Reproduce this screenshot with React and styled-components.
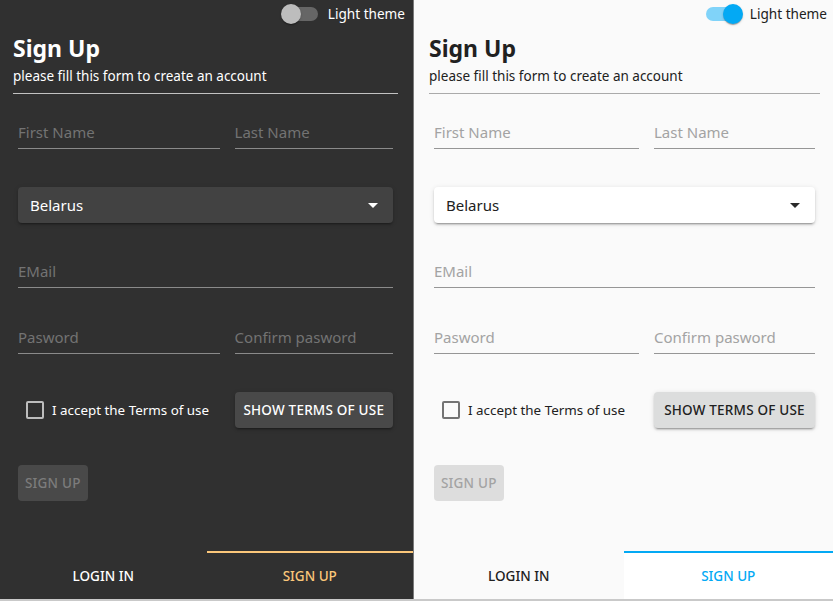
import React from "react";
import styled, { createGlobalStyle, css } from "styled-components";

const GlobalStyle = createGlobalStyle`
  html, body { margin: 0; padding: 0; }
  body {
    font-family: "Noto Sans", "Open Sans", sans-serif;
    -webkit-font-smoothing: antialiased;
  }
  * { box-sizing: border-box; }
`;

const themes = {
  dark: {
    bg: "#303030",
    text: "#ffffff",
    divider: "#c2c2c2",
    underline: "#8a8a8a",
    placeholder: "#737373",
    selectBg: "#424242",
    arrow: "#ffffff",
    buttonBg: "#494949",
    buttonText: "#ffffff",
    disabledBg: "#494949",
    disabledText: "#7c7c7c",
    checkbox: "#bdbdbd",
    tabText: "#ffffff",
    tabActive: "#fbc77a",
    tabActiveBg: "#303030",
    track: "#666666",
    thumb: "#bdbdbd",
  },
  light: {
    bg: "#fafafa",
    text: "#212121",
    divider: "#aaaaaa",
    underline: "#969696",
    placeholder: "#a3a3a3",
    selectBg: "#ffffff",
    arrow: "#2a2a2a",
    buttonBg: "#dcdddd",
    buttonText: "#212121",
    disabledBg: "#dddddd",
    disabledText: "#a3a3a3",
    checkbox: "#737373",
    tabText: "#212121",
    tabActive: "#03a9f4",
    tabActiveBg: "#ffffff",
    track: "#80d3f9",
    thumb: "#03a9f4",
  },
};

const elevation2 =
  "0px 3px 1px -2px rgba(0,0,0,0.2), 0px 2px 2px 0px rgba(0,0,0,0.14), 0px 1px 5px 0px rgba(0,0,0,0.12)";

const Page = styled.div`
  display: flex;
  height: 601px;
  border-bottom: 2px solid #c9c9c9;
`;

const Panel = styled.section`
  display: flex;
  flex-direction: column;
  background: ${(p) => p.$t.bg};
  color: ${(p) => p.$t.text};
  ${(p) =>
    p.$first
      ? css`
          width: 414px;
          border-right: 1px solid #7a7a7a;
        `
      : css`
          flex: 1;
        `}
`;

const Content = styled.div`
  flex: 1;
  display: flex;
  flex-direction: column;
  padding: 0 ${(p) => p.$pr}px 0 ${(p) => p.$pl}px;
`;

const TopBar = styled.div`
  height: 28px;
  display: flex;
  align-items: center;
  justify-content: flex-end;
  gap: 7px;
  margin-right: ${(p) => p.$mr}px;
`;

const SwitchRoot = styled.span`
  position: relative;
  width: 40px;
  height: 20px;
  flex: none;
`;

const Track = styled.span`
  position: absolute;
  left: 3px;
  top: 3px;
  width: 34px;
  height: 14px;
  border-radius: 7px;
  background: ${(p) => p.$t.track};
`;

const Thumb = styled.span`
  position: absolute;
  top: 0;
  left: ${(p) => (p.$on ? 20 : 0)}px;
  width: 20px;
  height: 20px;
  border-radius: 50%;
  background: ${(p) => p.$t.thumb};
  box-shadow: 0px 2px 1px -1px rgba(0,0,0,0.2), 0px 1px 1px 0px rgba(0,0,0,0.14), 0px 1px 3px 0px rgba(0,0,0,0.12);
`;

const SwitchLabel = styled.span`
  font-size: 13.6px;
  line-height: 20px;
`;

const Title = styled.h1`
  margin: 4px 0 0;
  font-size: 23px;
  line-height: 32px;
  font-weight: 700;
`;

const Subtitle = styled.p`
  margin: 2px 0 0;
  font-size: 13.5px;
  line-height: 20px;
`;

const Divider = styled.hr`
  margin: 7px 0 0;
  border: none;
  height: 1px;
  background: ${(p) => p.$t.divider};
`;

const Form = styled.div`
  display: flex;
  flex-direction: column;
  padding: 0 5px;
`;

const Row = styled.div`
  margin-top: ${(p) => p.$mt}px;
  display: grid;
  grid-template-columns: ${(p) =>
    p.$split ? "minmax(0, 56fr) minmax(0, 44fr)" : "minmax(0, 1fr)"};
  column-gap: 15px;
  align-items: center;
`;

const TextInput = styled.input`
  display: block;
  width: 100%;
  height: 33px;
  padding: 6px 0 7px;
  border: none;
  border-bottom: 1px solid ${(p) => p.$t.underline};
  background: transparent;
  font-family: inherit;
  font-size: 15px;
  color: ${(p) => p.$t.text};
  outline: none;
  &::placeholder {
    color: ${(p) => p.$t.placeholder};
    opacity: 1;
  }
`;

const Select = styled.div`
  height: 36px;
  display: flex;
  align-items: center;
  justify-content: space-between;
  padding: 0 8px 0 12px;
  border-radius: 4px;
  background: ${(p) => p.$t.selectBg};
  box-shadow: ${elevation2};
  font-size: 15px;
`;

const CheckCell = styled.label`
  display: flex;
  align-items: center;
  gap: 8px;
  padding-left: 8px;
  font-size: 13.4px;
  white-space: nowrap;
`;

const Box = styled.span`
  width: 18px;
  height: 18px;
  flex: none;
  border: 2px solid ${(p) => p.$t.checkbox};
  border-radius: 2px;
`;

const Button = styled.button`
  height: 36px;
  padding: 0 7px;
  border: none;
  border-radius: 4px;
  font-family: inherit;
  font-size: 13.5px;
  font-weight: 500;
  text-transform: uppercase;
  letter-spacing: 0.2px;
  white-space: nowrap;
  ${(p) =>
    p.disabled
      ? css`
          background: ${p.$t.disabledBg};
          color: ${p.$t.disabledText};
          justify-self: start;
        `
      : css`
          width: 100%;
          background: ${p.$t.buttonBg};
          color: ${p.$t.buttonText};
          box-shadow: ${elevation2};
        `}
`;

const Tabs = styled.nav`
  display: grid;
  grid-template-columns: 1fr 1fr;
  height: 48px;
`;

const Tab = styled.div`
  display: flex;
  align-items: center;
  justify-content: center;
  font-size: 13.5px;
  font-weight: 500;
  text-transform: uppercase;
  border-top: 2px solid ${(p) => (p.$active ? p.$t.tabActive : "transparent")};
  color: ${(p) => (p.$active ? p.$t.tabActive : p.$t.tabText)};
  background: ${(p) => (p.$active ? p.$t.tabActiveBg : "transparent")};
`;

const ArrowIcon = ({ color }) => (
  <svg width="24" height="24" viewBox="0 0 24 24">
    <path d="M7 10l5 5 5-5z" fill={color} />
  </svg>
);

function SignUpPanel({ mode, first }) {
  const t = themes[mode];
  const on = mode === "light";
  return (
    <Panel $t={t} $first={first}>
      <Content $pl={first ? 13 : 15} $pr={first ? 15 : 13}>
        <TopBar $mr={-7}>
          <SwitchRoot>
            <Track $t={t} />
            <Thumb $t={t} $on={on} />
          </SwitchRoot>
          <SwitchLabel>Light theme</SwitchLabel>
        </TopBar>
        <Title>Sign Up</Title>
        <Subtitle>please fill this form to create an account</Subtitle>
        <Divider $t={t} />
        <Form>
          <Row $mt={22} $split>
            <TextInput $t={t} placeholder="First Name" />
            <TextInput $t={t} placeholder="Last Name" />
          </Row>
          <Row $mt={38}>
            <Select $t={t}>
              <span>Belarus</span>
              <ArrowIcon color={t.arrow} />
            </Select>
          </Row>
          <Row $mt={32}>
            <TextInput $t={t} placeholder="EMail" />
          </Row>
          <Row $mt={33} $split>
            <TextInput $t={t} placeholder="Pasword" />
            <TextInput $t={t} placeholder="Confirm pasword" />
          </Row>
          <Row $mt={38} $split>
            <CheckCell>
              <Box $t={t} />
              I accept the Terms of use
            </CheckCell>
            <Button $t={t}>Show terms of use</Button>
          </Row>
          <Row $mt={37}>
            <Button $t={t} disabled>
              Sign up
            </Button>
          </Row>
        </Form>
      </Content>
      <Tabs>
        <Tab $t={t}>Login in</Tab>
        <Tab $t={t} $active>
          Sign up
        </Tab>
      </Tabs>
    </Panel>
  );
}

export default function App() {
  return (
    <>
      <GlobalStyle />
      <Page>
        <SignUpPanel mode="dark" first />
        <SignUpPanel mode="light" />
      </Page>
    </>
  );
}
